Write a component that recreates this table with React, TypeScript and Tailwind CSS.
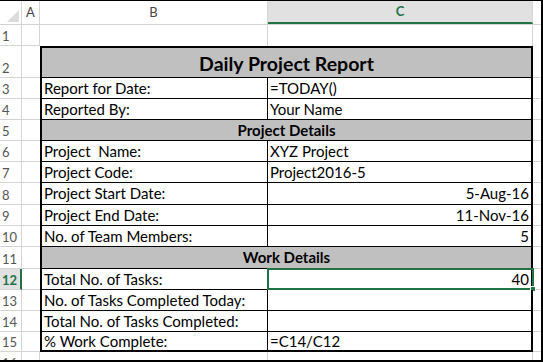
import React from 'react';

type Row =
  | { n: number; h: string; kind: 'empty' }
  | { n: number; h: string; kind: 'title' | 'section'; text: string }
  | { n: number; h: string; kind: 'data'; label: string; value?: string; right?: boolean; last?: boolean; selected?: boolean };

const rows: Row[] = [
  { n: 1, h: 'h-[21px]', kind: 'empty' },
  { n: 2, h: 'h-[32px]', kind: 'title', text: 'Daily Project Report' },
  { n: 3, h: 'h-[21px]', kind: 'data', label: 'Report for Date:', value: '=TODAY()' },
  { n: 4, h: 'h-[21px]', kind: 'data', label: 'Reported By:', value: 'Your Name' },
  { n: 5, h: 'h-[21px]', kind: 'section', text: 'Project Details' },
  { n: 6, h: 'h-[21px]', kind: 'data', label: 'Project  Name:', value: 'XYZ Project' },
  { n: 7, h: 'h-[21px]', kind: 'data', label: 'Project Code:', value: 'Project2016-5' },
  { n: 8, h: 'h-[22px]', kind: 'data', label: 'Project Start Date:', value: '5-Aug-16', right: true },
  { n: 9, h: 'h-[21px]', kind: 'data', label: 'Project End Date:', value: '11-Nov-16', right: true },
  { n: 10, h: 'h-[21px]', kind: 'data', label: 'No. of Team Members:', value: '5', right: true },
  { n: 11, h: 'h-[22px]', kind: 'section', text: 'Work Details' },
  { n: 12, h: 'h-[21px]', kind: 'data', label: 'Total No. of Tasks:', value: '40', right: true, selected: true },
  { n: 13, h: 'h-[21px]', kind: 'data', label: 'No. of Tasks Completed Today:' },
  { n: 14, h: 'h-[21px]', kind: 'data', label: 'Total No. of Tasks Completed:' },
  { n: 15, h: 'h-[20px]', kind: 'data', label: '% Work Complete:', value: '=C14/C12', last: true },
];

const RowHead = ({ n, selected }: { n: number; selected?: boolean }) => (
  <div
    className={
      selected
        ? 'w-[22px] shrink-0 flex items-end pb-[1px] pl-[2px] text-[13px] leading-[16px] font-bold text-[#217346] bg-[#e1e1e1] border-b border-[#d4d4d4] border-r-2 border-r-[#217346]'
        : 'w-[22px] shrink-0 flex items-end pb-[1px] pl-[2px] text-[13px] leading-[16px] text-[#555] border-b border-r border-[#d4d4d4]'
    }
  >
    {n}
  </div>
);

const App = () => {
  return (
    <div className="w-[543px] h-[362px] overflow-hidden bg-white border-t border-r-2 border-b-2 border-black font-['Lato',sans-serif] text-black">
      {/* column headers */}
      <div className="flex h-[24px] border-b border-[#d4d4d4]">
        <div className="relative w-[22px] shrink-0 border-r border-[#d4d4d4]">
          <div className="absolute right-[2px] bottom-[2px] w-0 h-0 border-l-[12px] border-l-transparent border-b-[12px] border-b-[#dcdcdc]" />
        </div>
        <div className="w-[18px] shrink-0 flex items-center justify-center text-[13px] text-[#444] border-r border-[#d4d4d4]">A</div>
        <div className="w-[228px] shrink-0 flex items-center justify-center text-[13px] text-[#444] border-r border-[#d4d4d4]">B</div>
        <div className="w-[265px] shrink-0 flex items-center justify-center text-[13px] font-bold text-[#217346] bg-[#e1e1e1] border-b-2 border-[#217346] border-r border-r-[#d4d4d4]">C</div>
        <div className="flex-1" />
      </div>

      {rows.map((r) => {
        if (r.kind === 'empty') {
          return (
            <div key={r.n} className={`flex ${r.h}`}>
              <RowHead n={r.n} />
              <div className="w-[18px] shrink-0 border-b border-r border-[#d4d4d4]" />
              <div className="w-[228px] shrink-0 border-r border-[#d4d4d4]" />
              <div className="w-[265px] shrink-0 border-r border-[#d4d4d4]" />
              <div className="flex-1" />
            </div>
          );
        }
        if (r.kind === 'title' || r.kind === 'section') {
          const title = r.kind === 'title';
          return (
            <div key={r.n} className={`flex ${r.h}`}>
              <RowHead n={r.n} />
              <div className="w-[18px] shrink-0 border-b border-[#d4d4d4]" />
              <div
                className={
                  title
                    ? 'w-[493px] shrink-0 flex items-center justify-center pt-[3px] bg-[#c0c0c0] border-t-2 border-x-2 border-b border-black text-[19.5px] font-bold'
                    : 'w-[493px] shrink-0 flex items-center justify-center bg-[#c0c0c0] border-x-2 border-b border-black text-[15px] font-bold'
                }
              >
                {r.text}
              </div>
              <div className="flex-1 border-b border-[#d4d4d4]" />
            </div>
          );
        }
        const bottom = r.last ? 'border-b-2' : 'border-b';
        return (
          <div key={r.n} className={`flex ${r.h}`}>
            <RowHead n={r.n} selected={r.selected} />
            <div className="w-[18px] shrink-0 border-b border-[#d4d4d4]" />
            <div className={`w-[228px] shrink-0 flex items-center pl-[2px] text-[15px] whitespace-pre border-l-2 border-r border-black ${bottom}`}>
              {r.label}
            </div>
            <div
              className={`relative w-[265px] shrink-0 flex items-center px-[2px] text-[15px] border-r-2 border-black ${bottom} ${
                r.right ? 'justify-end' : 'justify-start'
              }`}
            >
              {r.value}
              {r.selected && (
                <div className="absolute -left-[1px] -top-[1px] -right-[3px] -bottom-[1px] border-2 border-[#217346]">
                  <div className="absolute -right-[4px] -bottom-[4px] w-[6px] h-[6px] bg-[#217346] border border-white" />
                </div>
              )}
            </div>
            <div className="flex-1 border-b border-[#d4d4d4]" />
          </div>
        );
      })}

      {/* row 16, cut off */}
      <div className="flex h-[10px]">
        <div className="w-[22px] shrink-0 pl-[2px] pt-[5px] text-[13px] leading-none text-[#555] border-r border-[#d4d4d4]">16</div>
        <div className="w-[18px] shrink-0 border-r border-[#d4d4d4]" />
        <div className="w-[228px] shrink-0 border-r border-[#d4d4d4]" />
        <div className="w-[265px] shrink-0 border-r border-[#d4d4d4]" />
        <div className="flex-1" />
      </div>
    </div>
  );
};

export default App;
